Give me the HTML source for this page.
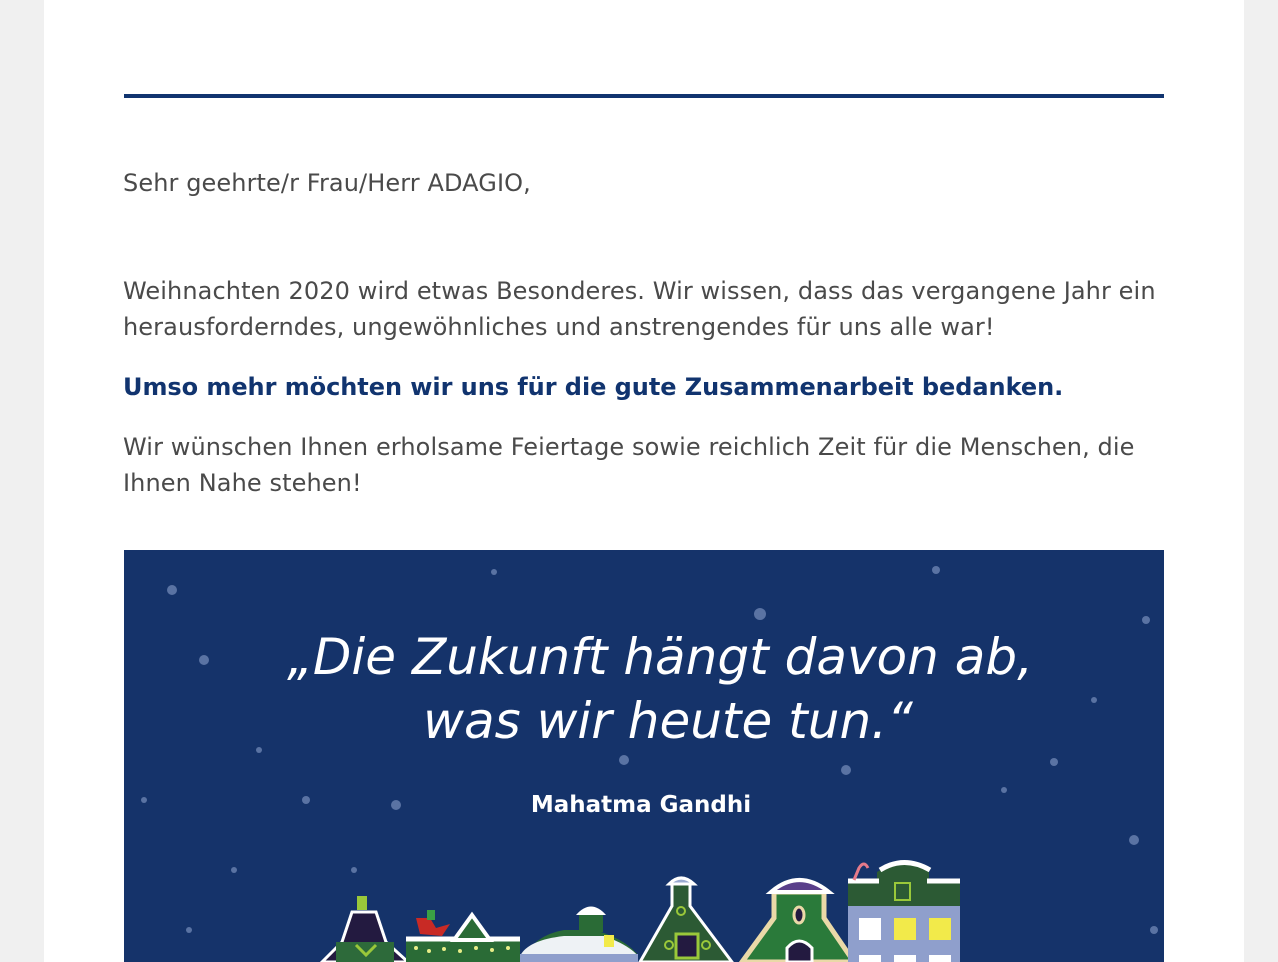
<!DOCTYPE html>
<html><head><meta charset="utf-8"><style>
html,body{margin:0;padding:0;background:#f0f0f0;width:1278px;height:962px;overflow:hidden}
.card{position:absolute;left:44px;top:0;width:1200px;height:962px;background:#fff}
.line{position:absolute;left:80px;top:94px;width:1040px;height:4px;background:#11346f}
p{position:absolute;left:79px;margin:0;width:1060px;font-family:"DejaVu Sans","Liberation Sans",sans-serif;font-size:24px;line-height:36px;color:#4a4a4a;letter-spacing:0.1px}
.b{color:#11346f;font-weight:bold;letter-spacing:-0.05px}
.img{position:absolute;left:80px;top:550px;width:1040px;height:412px}
</style></head><body>
<div class="card">
<div class="line"></div>
<p style="top:165px">Sehr geehrte/r Frau/Herr ADAGIO,</p>
<p style="top:273px">Weihnachten 2020 wird etwas Besonderes. Wir wissen, dass das vergangene Jahr ein herausforderndes, ungewöhnliches und anstrengendes für uns alle war!</p>
<p class="b" style="top:369px">Umso mehr möchten wir uns für die gute Zusammenarbeit bedanken.</p>
<p style="top:429px">Wir wünschen Ihnen erholsame Feiertage sowie reichlich Zeit für die Menschen, die Ihnen Nahe stehen!</p>
<svg class="img" viewBox="0 0 1040 412" xmlns="http://www.w3.org/2000/svg">
<rect width="1040" height="412" fill="#15336a"/>
<g fill="#5a73a3">
<circle cx="48" cy="40" r="5"/><circle cx="80" cy="110" r="5"/><circle cx="370" cy="22" r="3"/><circle cx="636" cy="64" r="6"/><circle cx="812" cy="20" r="4"/><circle cx="1022" cy="70" r="4"/><circle cx="182" cy="250" r="4"/><circle cx="272" cy="255" r="5"/><circle cx="500" cy="210" r="5"/><circle cx="722" cy="220" r="5"/><circle cx="930" cy="212" r="4"/><circle cx="135" cy="200" r="3"/><circle cx="20" cy="250" r="3"/><circle cx="970" cy="150" r="3"/><circle cx="1010" cy="290" r="5"/><circle cx="110" cy="320" r="3"/><circle cx="230" cy="320" r="3"/><circle cx="880" cy="240" r="3"/><circle cx="65" cy="380" r="3"/><circle cx="1030" cy="380" r="4"/>
</g>
<g fill="#fff" font-family="'DejaVu Sans','Liberation Sans',sans-serif">
<text x="536" y="124" font-size="50" font-style="italic" text-anchor="middle">„Die Zukunft hängt davon ab,</text>
<text x="544" y="188" font-size="50" font-style="italic" text-anchor="middle">was wir heute tun.“</text>
<text x="517" y="262" font-size="23" font-weight="bold" text-anchor="middle">Mahatma Gandhi</text>
</g>
<path d="M198 412 L218 392 L228 362 L252 362 L262 392 L284 412Z" fill="#231a40" stroke="#fff" stroke-width="3"/>
<rect x="233" y="346" width="10" height="14" fill="#9ac83a"/>
<rect x="212" y="392" width="58" height="20" fill="#2d6a3a"/>
<path d="M232 395 L242 405 L252 395" stroke="#9ac83a" stroke-width="3" fill="none"/>
<rect x="282" y="390" width="114" height="22" fill="#2a6b36"/>
<path d="M282 389 H396" stroke="#fff" stroke-width="5"/>
<path d="M330 390 L348 365 L366 390Z" fill="#2a6b36" stroke="#fff" stroke-width="4"/>
<path d="M292 368 L296 384 L318 386 L326 374 L312 378 L306 368Z" fill="#c82a25"/>
<rect x="303" y="360" width="8" height="10" fill="#3aa045"/>
<g fill="#e8ee88"><circle cx="292" cy="398" r="2"/><circle cx="305" cy="401" r="2"/><circle cx="320" cy="399" r="2"/><circle cx="336" cy="401" r="2"/><circle cx="352" cy="398" r="2"/><circle cx="368" cy="400" r="2"/><circle cx="384" cy="398" r="2"/></g>
<path d="M396 412 Q410 385 440 380 H470 Q500 388 514 405 V412Z" fill="#2a6b36"/>
<path d="M396 406 Q404 390 440 386 H480 Q505 395 514 406Z" fill="#eef2f5"/>
<rect x="396" y="404" width="118" height="8" fill="#8f9fcc"/>
<rect x="455" y="362" width="24" height="20" fill="#2a6b36"/>
<path d="M452 365 Q467 348 482 365" fill="#fff"/>
<rect x="480" y="385" width="10" height="12" fill="#f2ea4a"/>
<path d="M516 412 L548 356 V334 H566 V356 L608 412Z" fill="#2c5a34" stroke="#fff" stroke-width="3"/>
<path d="M545 334 Q557 322 570 334Z" fill="#9aaad0" stroke="#fff" stroke-width="3"/>
<rect x="552" y="384" width="22" height="24" fill="#231a40" stroke="#9ac83a" stroke-width="3"/>
<circle cx="557" cy="361" r="4" fill="none" stroke="#9ac83a" stroke-width="2"/>
<circle cx="545" cy="395" r="4" fill="none" stroke="#9ac83a" stroke-width="2"/>
<circle cx="582" cy="395" r="4" fill="none" stroke="#9ac83a" stroke-width="2"/>
<path d="M618 412 L650 368 V342 H700 V368 L730 412Z" fill="#2a7a3a" stroke="#ead9a8" stroke-width="5"/>
<path d="M647 342 Q675 318 705 342Z" fill="#5a3f8a" stroke="#fff" stroke-width="4"/>
<ellipse cx="675" cy="365" rx="5" ry="8" fill="#231a40" stroke="#ead9a8" stroke-width="3"/>
<path d="M663 412 V398 Q675 384 688 398 V412Z" fill="#231a40" stroke="#fff" stroke-width="3"/>
<path d="M724 412 V330 H753 V322 Q780 305 805 322 V330 H836 V412Z" fill="#2c5a34"/>
<rect x="724" y="356" width="112" height="56" fill="#8f9fcc"/>
<path d="M724 331 H755 M803 331 H836 M756 320 Q780 305 806 320" stroke="#fff" stroke-width="5" fill="none"/>
<path d="M730 330 L735 318 Q740 310 744 318" stroke="#e57a8a" stroke-width="3" fill="none"/>
<rect x="771" y="333" width="15" height="17" fill="none" stroke="#9ac83a" stroke-width="2"/>
<rect x="735" y="368" width="22" height="22" fill="#fff"/><rect x="770" y="368" width="22" height="22" fill="#f2ea4a"/><rect x="805" y="368" width="22" height="22" fill="#f2ea4a"/>
<rect x="735" y="405" width="22" height="7" fill="#fff"/><rect x="770" y="405" width="22" height="7" fill="#fff"/><rect x="805" y="405" width="22" height="7" fill="#fff"/>
</svg>
</div>
</body></html>
